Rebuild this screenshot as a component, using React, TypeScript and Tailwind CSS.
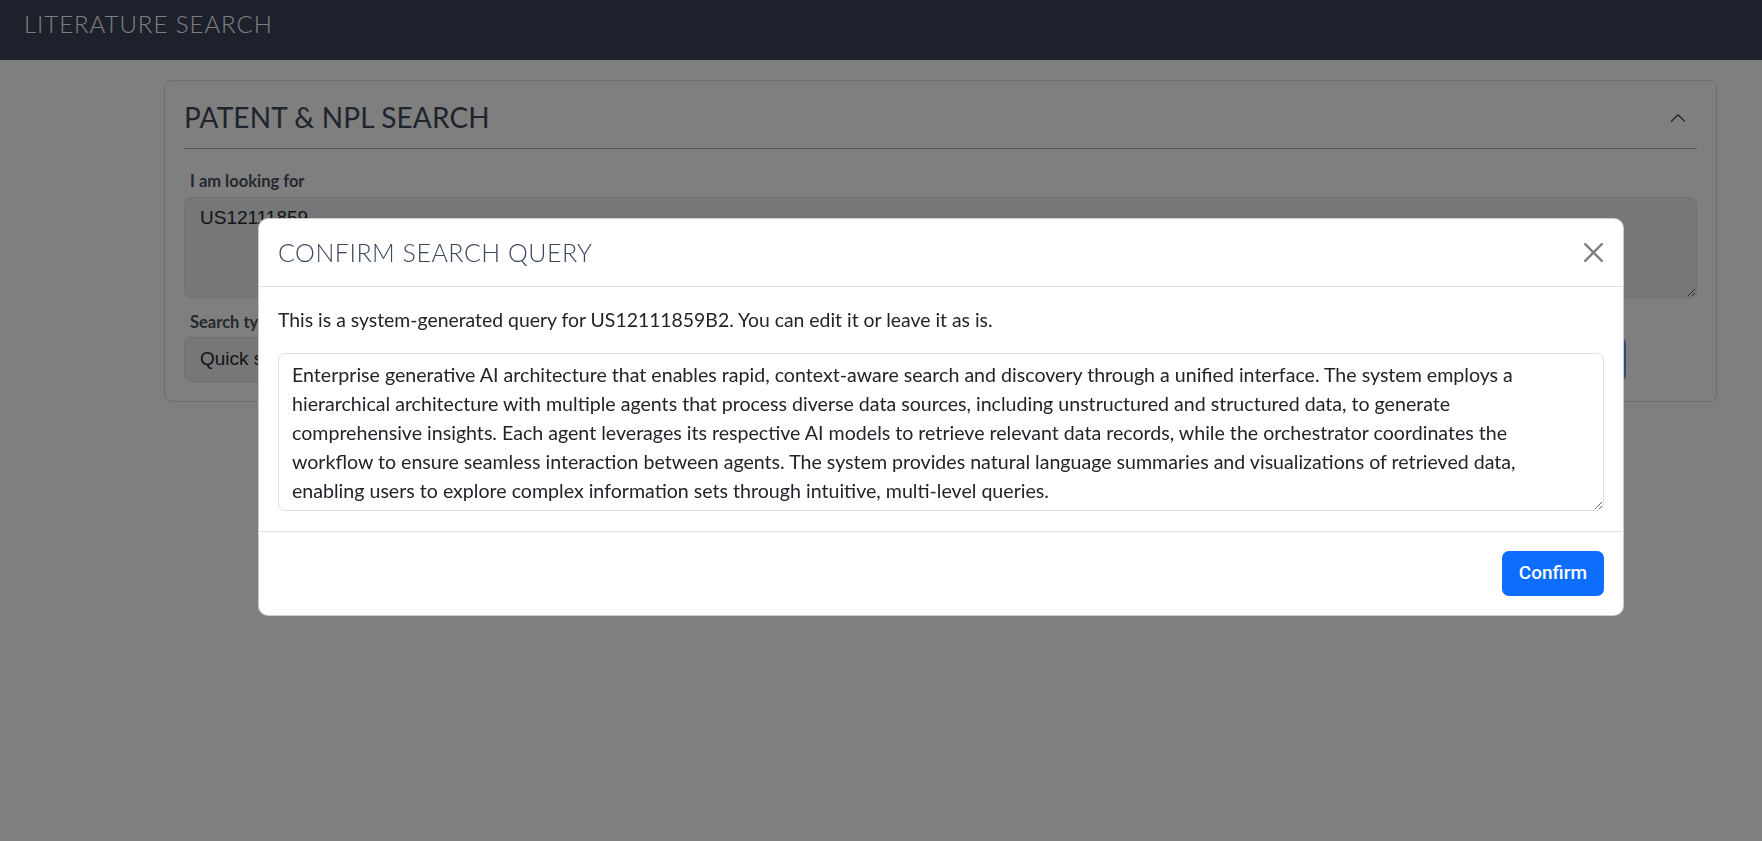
import { ChevronUp } from 'lucide-react';

const QUERY =
  'Enterprise generative AI architecture that enables rapid, context-aware search and discovery through a unified interface. The system employs a hierarchical architecture with multiple agents that process diverse data sources, including unstructured and structured data, to generate comprehensive insights. Each agent leverages its respective AI models to retrieve relevant data records, while the orchestrator coordinates the workflow to ensure seamless interaction between agents. The system provides natural language summaries and visualizations of retrieved data, enabling users to explore complex information sets through intuitive, multi-level queries.';

function CloseIcon() {
  return (
    <svg viewBox="0 0 16 16" className="w-[19px] h-[19px]" fill="currentColor">
      <path d="M.293.293a1 1 0 0 1 1.414 0L8 6.586 14.293.293a1 1 0 1 1 1.414 1.414L9.414 8l6.293 6.293a1 1 0 0 1-1.414 1.414L8 9.414l-6.293 6.293a1 1 0 0 1-1.414-1.414L6.586 8 .293 1.707a1 1 0 0 1 0-1.414" />
    </svg>
  );
}

function SearchCard() {
  return (
    <section className="rounded-[8px] border border-[#dcdcdc] bg-white p-[19px]">
      {/* card header */}
      <div className="flex items-center justify-between border-b border-[#a8b0c0] pb-[13px]">
        <h2 className="text-[28px] leading-[35px] tracking-[0.005em] text-[#404858] font-['Lato',sans-serif]">
          PATENT &amp; NPL SEARCH
        </h2>
        <ChevronUp className="w-[26px] h-[26px] mr-[6px] text-[#3c4a66]" strokeWidth={1.2} />
      </div>

      <label className="block mt-[20px] mb-[4px] px-[6px] text-[16.5px] leading-[24px] font-bold text-[#4a505e] font-['Lato',sans-serif]">
        I am looking for
      </label>
      <textarea
        disabled
        defaultValue="US12111859"
        className="block w-full h-[101px] rounded-[7px] border border-[#dee2e6] bg-[#eceef2] px-[15px] pt-[5px] pb-[7px] text-[19px] leading-[29px] text-[#2a2a2a] font-['Liberation_Sans',Arial,sans-serif] resize-y"
      />

      <label className="block mt-[12px] mb-[3px] px-[6px] text-[16.5px] leading-[24px] font-bold text-[#4a505e] font-['Lato',sans-serif]">
        Search type
      </label>
      <div className="flex gap-[16px] pr-[71px]">
        <div className="flex-1 h-[45px] rounded-[7px] border border-[#dee2e6] bg-[#eceef2] px-[15px] flex items-center text-[19px] text-[#2a2a2a] font-['Liberation_Sans',Arial,sans-serif]">
          Quick search
        </div>
        <button className="w-[150px] h-[45px] rounded-[7px] bg-[#5a9cfa] text-white text-[19px]">
          Search
        </button>
      </div>
    </section>
  );
}

function ConfirmModal() {
  return (
    <div className="fixed inset-0 flex justify-center items-start pt-[218px] pl-[120px]">
      <div className="w-[1366px] rounded-[10px] border border-black/20 bg-white text-[#212529] font-['Lato',sans-serif]">
        <div className="flex items-center justify-between h-[68px] px-[19px] border-b border-[#dee2e6]">
          <h5 className="text-[25px] font-light tracking-[0.02em] text-[#3b475c]">CONFIRM SEARCH QUERY</h5>
          <button className="text-black/50 mr-[1px]">
            <CloseIcon />
          </button>
        </div>

        <div className="px-[19px] pt-[18px] pb-[20px]">
          <p className="text-[19.4px] leading-[29px] mb-[19px]">
            This is a system-generated query for US12111859B2. You can edit it or leave it as is.
          </p>
          <textarea
            defaultValue={QUERY}
            className="block w-full h-[158px] rounded-[7px] border border-[#dee2e6] pl-[13px] pr-[48px] py-[6px] text-[19.6px] leading-[29px] text-[#212529] outline-none resize-y"
          />
        </div>

        <div className="flex justify-end border-t border-[#dee2e6] px-[19px] pt-[19px] pb-[19px]">
          <button className="h-[45px] px-[17px] rounded-[7px] bg-[#0d6efd] text-white text-[19px] font-medium font-['Roboto',sans-serif]">
            Confirm
          </button>
        </div>
      </div>
    </div>
  );
}

export default function App() {
  return (
    <div className="min-h-screen bg-white">
      <header className="h-[60px] bg-[#3b4258] px-[24px] pt-[9px]">
        <span className="block text-[24px] leading-[29px] font-light tracking-[0.04em] text-[#fbfcff] font-['Lato',sans-serif]">
          LITERATURE SEARCH
        </span>
      </header>

      <main className="pl-[164px] pr-[45px] pt-[20px]">
        <SearchCard />
      </main>

      {/* backdrop */}
      <div className="fixed inset-0 bg-black/50" />
      <ConfirmModal />
    </div>
  );
}
